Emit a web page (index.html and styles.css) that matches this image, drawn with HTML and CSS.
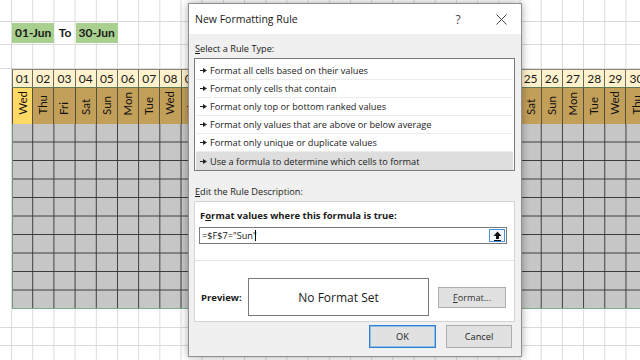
FILE: index.html
```html
<!DOCTYPE html>
<html lang="en">
<head>
    <meta charset="UTF-8">
    <meta name="viewport" content="width=device-width, initial-scale=1.0">
    <title>New Formatting Rule</title>
    <link rel="stylesheet" href="styles.css">
</head>
<body>

    <!-- Worksheet behind the dialog -->
    <div class="sheet">
        <div class="row"></div>
        <div class="row range-row">
            <div class="range-date">01-Jun</div>
            <div class="range-to">To</div>
            <div class="range-date">30-Jun</div>
        </div>
        <div class="row row-tall"></div>

        <div class="row num-row">
            <div class="num">01</div><div class="num">02</div><div class="num">03</div>
            <div class="num">04</div><div class="num">05</div><div class="num">06</div>
            <div class="num">07</div><div class="num">08</div><div class="num">09</div>
            <div class="num">10</div><div class="num">11</div><div class="num">12</div>
            <div class="num">13</div><div class="num">14</div><div class="num">15</div>
            <div class="num">16</div><div class="num">17</div><div class="num">18</div>
            <div class="num">19</div><div class="num">20</div><div class="num">21</div>
            <div class="num">22</div><div class="num">23</div><div class="num">24</div>
            <div class="num">25</div><div class="num">26</div><div class="num">27</div>
            <div class="num">28</div><div class="num">29</div><div class="num">30</div>
        </div>

        <div class="row day-row">
            <div class="day active"><span>Wed</span></div><div class="day"><span>Thu</span></div>
            <div class="day"><span>Fri</span></div><div class="day"><span>Sat</span></div>
            <div class="day"><span>Sun</span></div><div class="day"><span>Mon</span></div>
            <div class="day"><span>Tue</span></div><div class="day"><span>Wed</span></div>
            <div class="day"><span>Thu</span></div><div class="day"><span>Fri</span></div>
            <div class="day"><span>Sat</span></div><div class="day"><span>Sun</span></div>
            <div class="day"><span>Mon</span></div><div class="day"><span>Tue</span></div>
            <div class="day"><span>Wed</span></div><div class="day"><span>Thu</span></div>
            <div class="day"><span>Fri</span></div><div class="day"><span>Sat</span></div>
            <div class="day"><span>Sun</span></div><div class="day"><span>Mon</span></div>
            <div class="day"><span>Tue</span></div><div class="day"><span>Wed</span></div>
            <div class="day"><span>Thu</span></div><div class="day"><span>Fri</span></div>
            <div class="day"><span>Sat</span></div><div class="day"><span>Sun</span></div>
            <div class="day"><span>Mon</span></div><div class="day"><span>Tue</span></div>
            <div class="day"><span>Wed</span></div><div class="day"><span>Thu</span></div>
        </div>

        <div class="block"></div>
        <div class="row row-short"></div>
        <div class="row row-short"></div>
        <div class="row row-short"></div>
    </div>

    <!-- New Formatting Rule dialog -->
    <div class="dialog">
        <div class="title-bar">
            <span class="title">New Formatting Rule</span>
            <span class="help">?</span>
            <span class="close">
                <svg width="11" height="11" viewBox="0 0 11 11"><path d="M0.5 0.5l10 10M10.5 0.5l-10 10" stroke="#444" stroke-width="1"/></svg>
            </span>
        </div>

        <div class="dialog-body">
            <div class="label"><u>S</u>elect a Rule Type:</div>
            <ul class="rule-list">
                <li><svg class="marker" width="7" height="5" viewBox="0 0 7 5"><path d="M0 2h3v1H0z M3 0l4 2.5L3 5z" fill="#222"/></svg>Format all cells based on their values</li>
                <li><svg class="marker" width="7" height="5" viewBox="0 0 7 5"><path d="M0 2h3v1H0z M3 0l4 2.5L3 5z" fill="#222"/></svg>Format only cells that contain</li>
                <li><svg class="marker" width="7" height="5" viewBox="0 0 7 5"><path d="M0 2h3v1H0z M3 0l4 2.5L3 5z" fill="#222"/></svg>Format only top or bottom ranked values</li>
                <li><svg class="marker" width="7" height="5" viewBox="0 0 7 5"><path d="M0 2h3v1H0z M3 0l4 2.5L3 5z" fill="#222"/></svg>Format only values that are above or below average</li>
                <li><svg class="marker" width="7" height="5" viewBox="0 0 7 5"><path d="M0 2h3v1H0z M3 0l4 2.5L3 5z" fill="#222"/></svg>Format only unique or duplicate values</li>
                <li class="selected"><svg class="marker" width="7" height="5" viewBox="0 0 7 5"><path d="M0 2h3v1H0z M3 0l4 2.5L3 5z" fill="#222"/></svg>Use a formula to determine which cells to format</li>
            </ul>

            <div class="label label-edit"><u>E</u>dit the Rule Description:</div>
            <div class="rule-box">
                <div class="rule-edit">
                    <div class="formula-label">F<u>o</u>rmat values where this formula is true:</div>
                    <div class="formula-input">
                        <span class="formula-text">=$F$7="Sun"</span><span class="caret"></span>
                        <span class="collapse-btn">
                            <svg width="9" height="10" viewBox="0 0 9 10"><path d="M4.5 0.5L8.5 5H6v3H3V5H0.5z" fill="#111"/><path d="M1 9.5h7" stroke="#111" stroke-width="1"/></svg>
                        </span>
                    </div>
                </div>
                <div class="preview-row">
                    <span class="preview-label">Preview:</span>
                    <div class="preview-box">No Format Set</div>
                    <button class="btn btn-format"><u>F</u>ormat...</button>
                </div>
            </div>

            <div class="footer">
                <button class="btn btn-ok">OK</button>
                <button class="btn btn-cancel">Cancel</button>
            </div>
        </div>
    </div>

</body>
</html>
```

FILE: styles.css
```css
body {
    margin: 0;
    width: 640px;
    height: 360px;
    overflow: hidden;
    position: relative;
    background: #fff;
    font-family: Lato, "Liberation Sans", sans-serif;
    color: #1a1a1a;
}

/* worksheet */
.sheet {
    height: 360px;
    border-left: 1px solid #b0b0b0;
    box-sizing: border-box;
    margin-left: -1px;
    background-image: linear-gradient(90deg, transparent calc(100% - 1px), #dadada 0);
    background-size: 21.2px 100%;
    background-position: 12px 0;
}
.row {
    display: grid;
    grid-template-columns: 12px repeat(30, 21.2px);
    height: 22px;
    box-sizing: border-box;
    border-bottom: 1px solid #dadada;
}
.row-tall {
    height: 24px;
}
.row-short {
    height: 18.5px;
}
.range-row {
    height: 23px;
    font-size: 12px;
    font-weight: bold;
}
.range-date {
    grid-column: span 2;
    background: #a9d08e;
    margin: 1px 0 2px;
    padding-left: 3px;
    line-height: 20px;
}
.range-row .range-date:first-child {
    grid-column: 2 / span 2;
}
.range-to {
    text-align: center;
    line-height: 22px;
}
.num-row {
    height: 19px;
    border-bottom: none;
}
.num {
    background: #fff2cc;
    border-top: 1px solid #8a8a80;
    border-right: 1px solid #6c6c5c;
    border-bottom: 1px solid #5f7b55;
    box-sizing: border-box;
    font-size: 12px;
    text-align: center;
    line-height: 17px;
}
.num:first-child {
    grid-column: 2;
    border-left: 1px solid #6c6c5c;
}
.day-row {
    height: 36px;
    border-bottom: none;
}
.day {
    background: #c3a05a;
    border-right: 1px solid #55503c;
    box-sizing: border-box;
    display: flex;
    flex-direction: column;
    justify-content: flex-end;
    align-items: center;
    padding-bottom: 9px;
    font-size: 11.5px;
    color: #111;
}
.day:first-child {
    grid-column: 2;
    border-left: 1px solid #55503c;
}
.day.active {
    background: #ffd966;
}
.day span {
    writing-mode: vertical-rl;
    transform: rotate(180deg);
    line-height: 12px;
}
.block {
    margin-left: 12px;
    height: 185px;
    box-sizing: border-box;
    background-color: #c6c6c6;
    background-image:
        linear-gradient(90deg, transparent calc(100% - 1px), #3a3a3a 0),
        linear-gradient(180deg, transparent calc(100% - 1px), #3a3a3a 0);
    background-size: 21.2px 100%, 100% 18.5px;
    background-origin: border-box;
    border-left: 1px solid #6f9a7c;
    border-bottom: 1px solid #7fae8c;
}

/* dialog */
.dialog {
    position: absolute;
    left: 188px;
    top: 3px;
    width: 334px;
    height: 354px;
    box-sizing: border-box;
    background: #f0f0f0;
    border: 1px solid #8f8f8f;
    box-shadow: 0 0 8px rgba(0, 0, 0, 0.35);
    font-family: "Open Sans", "Noto Sans", sans-serif;
    font-size: 9.2px;
    color: #1a1a1a;
}
.title-bar {
    height: 30px;
    background: #fff;
    display: flex;
    align-items: center;
    padding-left: 6px;
}
.title {
    font-size: 10.5px;
}
.help {
    margin-left: auto;
    width: 14px;
    text-align: center;
    font-size: 12px;
    color: #444;
    margin-right: 18px;
}
.close {
    width: 36px;
    margin-right: 2px;
    display: flex;
    justify-content: center;
}
.dialog-body {
    padding: 0 6px 0 5px;
}
.label {
    margin-top: 8px;
    margin-left: 1px;
    line-height: 14px;
}
.label-edit {
    margin-top: 14px;
}
.rule-list {
    list-style: none;
    margin: 2px 0 0;
    padding: 3px 1px 0;
    background: #fff;
    border: 1px solid #7a7a7a;
}
.rule-list li {
    height: 18px;
    box-sizing: border-box;
    border-bottom: 1px solid #ececec;
    display: flex;
    align-items: center;
    padding-left: 4px;
}
.rule-list li.selected {
    background: #dedede;
    border-bottom: none;
}
.marker {
    margin-right: 3px;
}
.rule-box {
    margin-top: 2px;
    height: 121px;
    box-sizing: border-box;
    background: #fff;
    border: 1px solid #d4d4d4;
}
.rule-edit {
    padding: 7px 7px 16px 4px;
    border-bottom: 1px solid #e3e3e3;
}
.formula-label {
    font-weight: bold;
    font-size: 9.5px;
    line-height: 14px;
    padding-left: 1px;
}
.formula-input {
    margin-top: 4px;
    height: 17px;
    box-sizing: border-box;
    border: 1px solid #7a7a7a;
    display: flex;
    align-items: center;
    padding-left: 2px;
}
.caret {
    width: 1px;
    height: 11px;
    background: #000;
    margin-left: -2px;
}
.collapse-btn {
    margin-left: auto;
    margin-right: 1px;
    width: 16px;
    height: 13px;
    box-sizing: border-box;
    border: 1px solid #4a92dc;
    background: #f4f9ff;
    display: flex;
    justify-content: center;
    align-items: center;
}
.preview-row {
    display: flex;
    align-items: center;
    padding: 17px 0 0 6px;
}
.preview-label {
    width: 47px;
    font-weight: bold;
    font-size: 9.5px;
}
.preview-box {
    width: 181px;
    height: 38px;
    box-sizing: border-box;
    border: 1px solid #7a7a7a;
    display: flex;
    justify-content: center;
    align-items: center;
    font-size: 12px;
    margin-right: 9px;
}
.btn {
    font-family: inherit;
    font-size: 9.2px;
    color: #1a1a1a;
    background: #e1e1e1;
    border: 1px solid #adadad;
    padding: 0;
}
.btn-format {
    width: 68px;
    height: 21px;
    color: #333;
}
.footer {
    display: flex;
    justify-content: flex-end;
    gap: 10px;
    margin-top: 3px;
    padding-right: 3px;
}
.btn-ok {
    width: 67px;
    height: 23px;
    border: 1px solid #2f7fd0;
    box-shadow: inset 0 0 0 1px #8fbde8;
}
.btn-cancel {
    width: 66px;
    height: 23px;
}
```
